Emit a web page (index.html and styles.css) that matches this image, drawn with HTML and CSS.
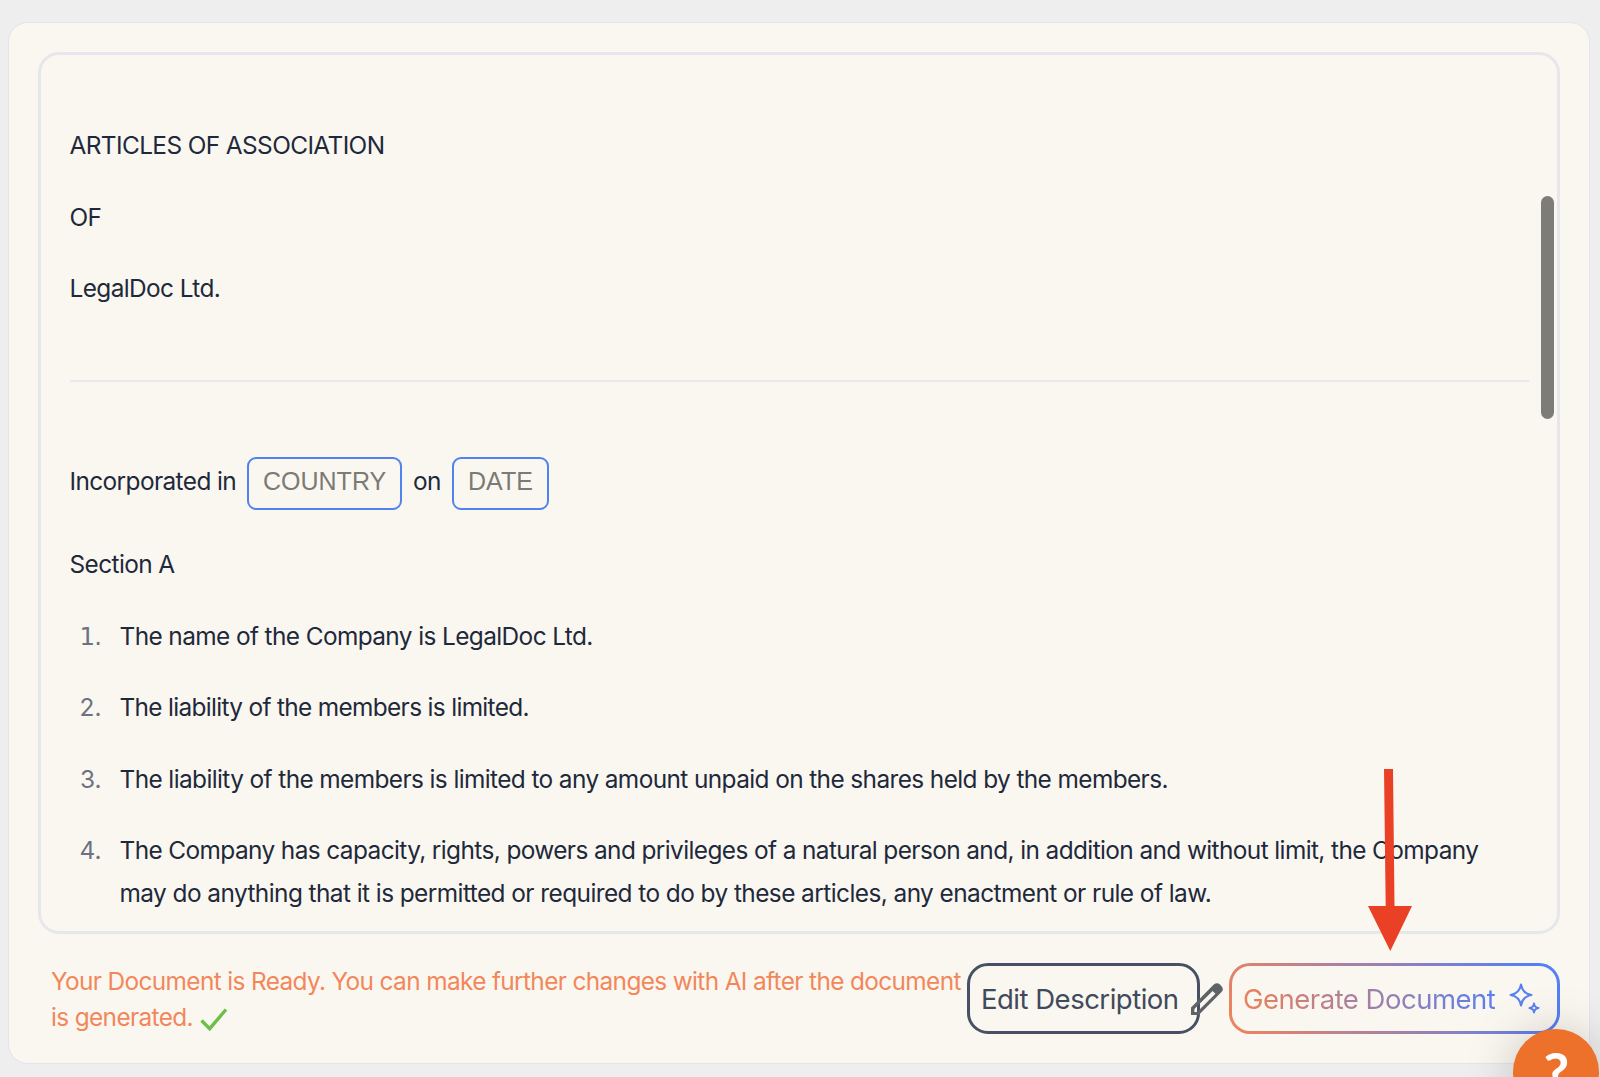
FILE: index.html
```
<!DOCTYPE html>
<html lang="en">
<head>
    <meta charset="UTF-8">
    <meta name="viewport" content="width=device-width, initial-scale=1.0">
    <title>Articles of Association</title>
    <link rel="stylesheet" href="styles.css">
</head>
<body>
    <div class="card">
        <div class="document">
            <p>ARTICLES OF ASSOCIATION</p>
            <p>OF</p>
            <p>LegalDoc Ltd.</p>
            <hr>
            <div class="incorporated">
                <span>Incorporated in</span>
                <span class="field country">COUNTRY</span>
                <span>on</span>
                <span class="field date">DATE</span>
            </div>
            <p>Section A</p>
            <ol>
                <li><span class="num slab">1.</span><span>The name of the Company is LegalDoc Ltd.</span></li>
                <li><span class="num">2.</span><span class="tight">The liability of the members is limited.</span></li>
                <li><span class="num">3.</span><span>The liability of the members is limited to any amount unpaid on the shares held by the members.</span></li>
                <li><span class="num">4.</span><span>The Company has capacity, rights, powers and privileges of a natural person and, in addition and without limit, the Company<br><span class="loose">may do anything that it is permitted or required to do by these articles, any enactment or rule of law.</span></span></li>
            </ol>
            <div class="scrollbar"></div>
        </div>

        <div class="footer">
            <p class="status">
                Your Document is Ready. You can make further changes with AI after the document<br>is generated.
                <svg class="check" width="28" height="24" viewBox="0 0 28 24">
                    <path d="M1.5 12.5 L9.7 20.7 L26 1.5" fill="none" stroke="#6cc04a" stroke-width="3.4"/>
                </svg>
            </p>
            <button class="btn edit">
                <span>Edit Description</span>
                <svg class="pencil" width="32" height="32" viewBox="0 0 32 32">
                    <path fill="#5f6368" fill-rule="evenodd" d="M0 24.500 L22.800 1.600 Q26 -1.200 29 1.600 L30.500 3.200 Q33.200 6.200 30.500 9 L7.800 32 H0 Z M3.400 26 V29 H6 L24.500 10.800 L21.600 8 Z"/>
                </svg>
            </button>
            <button class="btn generate">
                <span>Generate Document</span>
                <svg class="sparkle" width="32" height="32" viewBox="0 0 32 32" fill="none" stroke="#5880f3" stroke-width="2" stroke-linejoin="round">
                    <path d="M12 1.500 Q13.500 10.500 22.500 12 Q13.500 13.500 12 22.500 Q10.500 13.500 1.500 12 Q10.500 10.500 12 1.500 Z"/>
                    <path d="M25 20.500 Q25.500 24.500 29.500 25 Q25.500 25.500 25 29.500 Q24.500 25.500 20.500 25 Q24.500 24.500 25 20.500 Z"/>
                </svg>
            </button>
        </div>
    </div>

    <svg class="arrow" width="46" height="184" viewBox="0 0 46 184">
        <path fill="#ea4025" d="M17 0 H26 L27.500 137 H45 L23.300 182 L1 137 H18.700 Z"/>
    </svg>
    <div class="help">?</div>
</body>
</html>
```
FILE: styles.css
```
* {
    box-sizing: border-box;
}

body {
    margin: 0;
    height: 1077px;
    padding: 22px 10px 0 8px;
    overflow: hidden;
    position: relative;
    background: #eeeeee;
    font-family: Inter, sans-serif;
    font-size: 24.4px;
    letter-spacing: -0.6px;
    color: #1e293b;
}

.card {
    height: 1042px;
    padding: 29px;
    border: 1px solid #e2e5ec;
    border-radius: 20px;
    background: #faf7f0;
}

.document {
    position: relative;
    height: 882px;
    padding: 69px 28.5px 0;
    border: 3px solid #e5e7eb;
    border-radius: 21px;
    line-height: 43px;
}

.document p {
    margin: 0 0 28.5px;
}

hr {
    height: 2px;
    margin: 70px 0 75px;
    border: none;
    background: #e7e9ec;
}

.incorporated {
    display: flex;
    align-items: baseline;
    margin-bottom: 33px;
}

.field {
    border: 2px solid #4f83f0;
    border-radius: 9px;
    padding: 1px 0 5px;
    margin: 0 11px;
    font-family: "Liberation Sans", Arial, sans-serif;
    font-size: 25px;
    line-height: 43px;
    letter-spacing: 0;
    text-align: center;
    color: #7b7a75;
}

.country {
    width: 155px;
}

.date {
    width: 97px;
}

ol {
    margin: 0;
    padding: 0;
    list-style: none;
}

li {
    display: flex;
    margin-bottom: 28.5px;
    white-space: nowrap;
}

.num {
    width: 32px;
    margin-right: 18px;
    text-align: right;
    letter-spacing: 0;
    color: #6b7280;
}

.slab {
    font-family: "DejaVu Sans", sans-serif;
    letter-spacing: -0.6px;
}

.tight {
    letter-spacing: -0.67px;
}

.loose {
    letter-spacing: -0.56px;
}

.scrollbar {
    position: absolute;
    top: 141px;
    right: 3px;
    width: 13px;
    height: 223px;
    border-radius: 7px;
    background: #7d7c77;
}

.footer {
    display: flex;
    align-items: flex-start;
    margin-top: 29px;
}

.status {
    width: 916px;
    margin: 0 0 0 13px;
    line-height: 36px;
    letter-spacing: -0.64px;
    white-space: nowrap;
    color: #f2875b;
}

.check {
    margin-left: 1px;
    vertical-align: -6px;
}

.btn {
    display: flex;
    align-items: center;
    flex-shrink: 0;
    height: 71px;
    padding: 0 11px;
    border: 3px solid #475163;
    border-radius: 21px;
    background: #faf7f0;
    font-family: inherit;
    font-size: 27.5px;
    letter-spacing: -0.5px;
    white-space: nowrap;
    color: #3f4a5c;
}

.edit {
    width: 233px;
    margin-left: 1px;
}

.pencil {
    flex-shrink: 0;
    margin-left: 12px;
}

.generate {
    width: 331px;
    margin-left: 29px;
    border-color: transparent;
    background: linear-gradient(#faf7f0, #faf7f0) padding-box, linear-gradient(60deg, #f2835a, #557ff5 92%) border-box;
}

.generate span {
    background: linear-gradient(68deg, #ee8057, #557ff5);
    -webkit-background-clip: text;
    background-clip: text;
    color: transparent;
}

.sparkle {
    margin-left: 14px;
}

.arrow {
    position: absolute;
    left: 1367px;
    top: 769px;
}

.help {
    position: absolute;
    left: 1513px;
    top: 1029px;
    width: 86px;
    height: 86px;
    border-radius: 50%;
    background: #ee712b;
    box-shadow: 0 4px 50px rgba(0, 0, 0, 0.22);
    font-family: Lato, sans-serif;
    font-size: 56px;
    font-weight: bold;
    line-height: 86px;
    text-align: center;
    color: #fff;
}
```
